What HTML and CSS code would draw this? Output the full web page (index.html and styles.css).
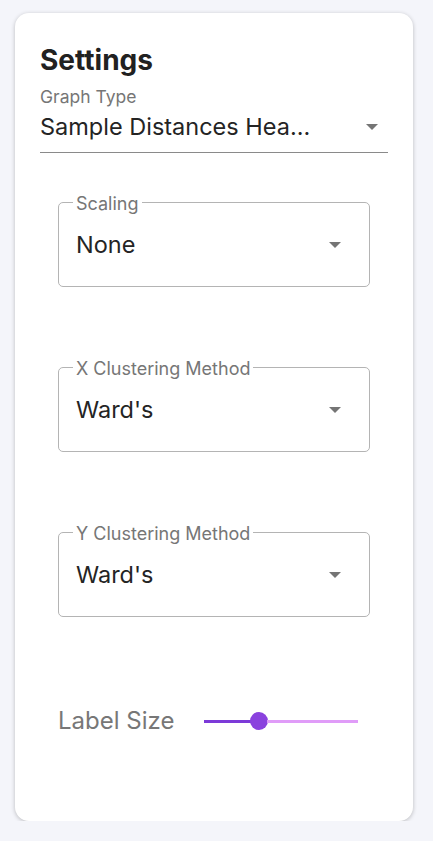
FILE: index.html
```html
<!DOCTYPE html>
<html>
<head>
<meta charset="utf-8">
<link rel="stylesheet" href="styles.css">
</head>
<body>
<div class="card">
  <h1 class="title">Settings</h1>
  <div class="std-field">
    <div class="std-label">Graph Type</div>
    <div class="std-select">
      <span class="std-value">Sample Distances Hea...</span>
      <svg class="caret" width="12" height="6" viewBox="0 0 12 6"><path d="M0 0h12L6 6z" fill="#757575"/></svg>
    </div>
  </div>
  <div class="group">
    <div class="outlined">
      <span class="o-label">Scaling</span>
      <span class="o-value">None</span>
      <svg class="caret" width="12" height="6" viewBox="0 0 12 6"><path d="M0 0h12L6 6z" fill="#757575"/></svg>
    </div>
    <div class="outlined">
      <span class="o-label">X Clustering Method</span>
      <span class="o-value">Ward's</span>
      <svg class="caret" width="12" height="6" viewBox="0 0 12 6"><path d="M0 0h12L6 6z" fill="#757575"/></svg>
    </div>
    <div class="outlined">
      <span class="o-label">Y Clustering Method</span>
      <span class="o-value">Ward's</span>
      <svg class="caret" width="12" height="6" viewBox="0 0 12 6"><path d="M0 0h12L6 6z" fill="#757575"/></svg>
    </div>
    <div class="slider-row">
      <span class="slider-label">Label Size</span>
      <div class="slider">
        <div class="track-done"></div>
        <div class="thumb"></div>
        <div class="track-rest"></div>
      </div>
    </div>
  </div>
</div>
</body>
</html>
```
FILE: styles.css
```css
* { box-sizing: border-box; }
body {
  margin: 0;
  background: #f4f5fa;
  font-family: Inter, "Noto Sans", sans-serif;
}
.card {
  margin: 13px 0 0 15px;
  width: 398px;
  height: 808px;
  background: #fff;
  border-radius: 14px;
  box-shadow: 0 1px 4px rgba(0,0,0,0.24);
  padding: 30px 25px 0 25px;
}
.title {
  margin: 0;
  font-size: 28px;
  font-weight: 700;
  color: #212121;
  line-height: 34px;
}
.std-field {
  margin-top: 10px;
}
.std-label {
  font-size: 17.5px;
  color: #767676;
  line-height: 20px;
}
.std-select {
  display: flex;
  align-items: center;
  justify-content: space-between;
  height: 46px;
  border-bottom: 1px solid #8a8a8a;
  padding: 0 10px 5px 0;
}
.std-value {
  font-size: 23.5px;
  color: #242424;
  line-height: 40px;
}
.group {
  padding: 0 18px;
  margin-top: 49px;
  display: flex;
  flex-direction: column;
}
.outlined {
  position: relative;
  height: 85px;
  margin-bottom: 80px;
  border: 1px solid #b4b4b4;
  border-radius: 5px;
  padding: 0 28px 0 17px;
  display: flex;
  align-items: center;
  justify-content: space-between;
}
.o-label {
  position: absolute;
  top: -10px;
  left: 14px;
  padding: 0 3px;
  background: #fff;
  font-size: 18px;
  line-height: 22px;
  color: #767676;
}
.o-value {
  font-size: 23.5px;
  color: #242424;
  line-height: 30px;
}
.slider-row {
  display: flex;
  align-items: center;
  height: 24px;
  margin-top: 12px;
}
.slider-label {
  font-size: 24px;
  color: #777;
  width: 146px;
  line-height: 24px;
}
.slider {
  display: flex;
  align-items: center;
  width: 154px;
}
.track-done {
  width: 47px;
  height: 3px;
  background: #7c3ad8;
}
.thumb {
  width: 18px;
  height: 18px;
  border-radius: 50%;
  background: #8a42de;
  margin: 0 -1px;
}
.track-rest {
  flex: 1;
  height: 3px;
  background: #e09cf8;
}
```
